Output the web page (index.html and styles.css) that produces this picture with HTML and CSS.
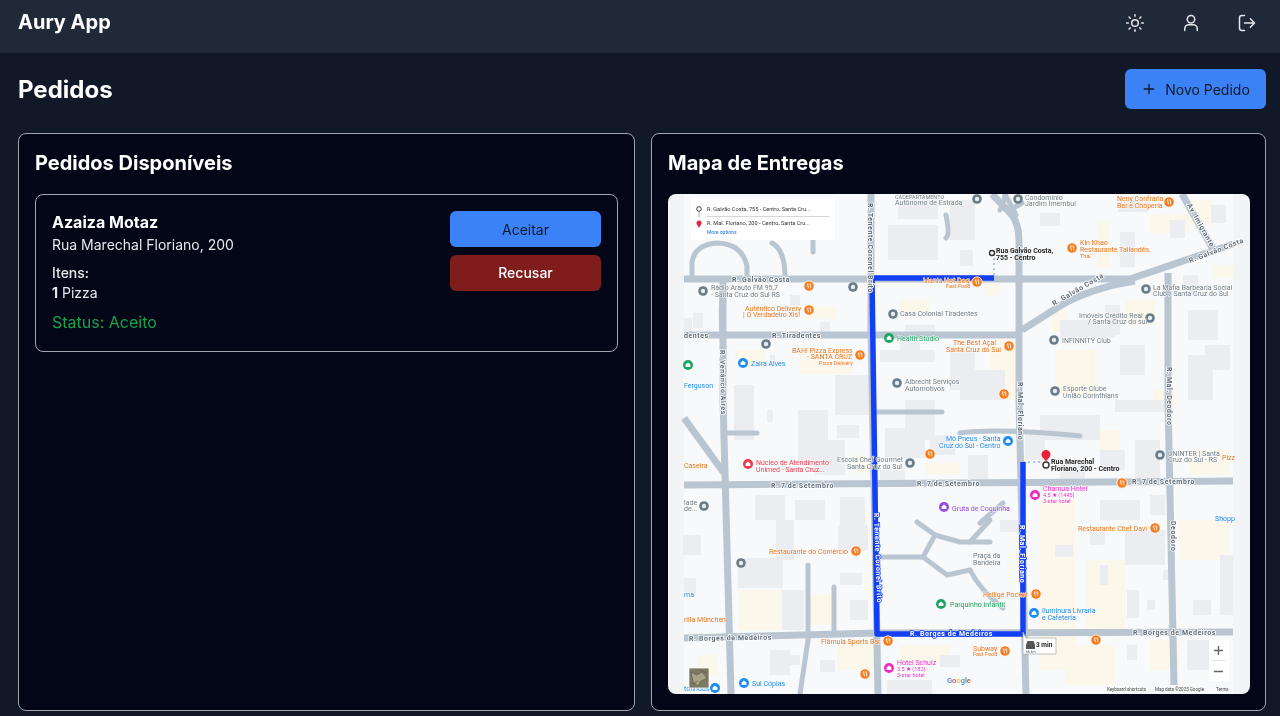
FILE: index.html
```html
<!DOCTYPE html>
<html lang="pt-BR">
<head>
<meta charset="utf-8">
<title>Aury App</title>
<link rel="stylesheet" href="styles.css">
</head>
<body>
<header class="topbar">
  <div class="brand">Aury App</div>
  <nav class="top-icons">
    <svg class="ico" viewBox="0 0 24 24"><circle cx="12" cy="12" r="4"/><path d="M12 2v2M12 20v2M4.900 4.900l1.400 1.400M17.700 17.700l1.400 1.400M2 12h2M20 12h2M6.300 17.700l-1.400 1.400M19.100 4.900l-1.400 1.400"/></svg>
    <svg class="ico" viewBox="0 0 24 24"><circle cx="12" cy="7.500" r="4.500"/><path d="M4.500 21v-2a5 5 0 0 1 5-5h5a5 5 0 0 1 5 5v2"/></svg>
    <svg class="ico" viewBox="0 0 24 24"><path d="M9 21H6a3 3 0 0 1-3-3V6a3 3 0 0 1 3-3h3"/><path d="M16 7l5 5-5 5M21 12H9"/></svg>
  </nav>
</header>
<main class="page">
  <div class="page-head">
    <h1>Pedidos</h1>
    <button class="btn btn-new"><svg class="plus" viewBox="0 0 24 24"><path d="M12 5v14M5 12h14"/></svg>Novo Pedido</button>
  </div>
  <div class="columns">
    <section class="panel">
      <h2>Pedidos Disponíveis</h2>
      <article class="order">
        <div class="order-info">
          <h3>Azaiza Motaz</h3>
          <p class="addr">Rua Marechal Floriano, 200</p>
          <p class="items-label">Itens:</p>
          <p class="items"><b>1</b> Pizza</p>
          <p class="status">Status: Aceito</p>
        </div>
        <div class="order-actions">
          <button class="btn btn-accept">Aceitar</button>
          <button class="btn btn-refuse">Recusar</button>
        </div>
      </article>
    </section>
    <section class="panel">
      <h2>Mapa de Entregas</h2>
      <div class="map">
        <svg class="map-svg" viewBox="668 194 582 500" width="582" height="500">
          <defs>
            <g id="food"><circle r="5.200" fill="currentColor" stroke="#fff" stroke-width=".8"/><path d="M-1.600-2.600v2.200a1 1 0 0 0 1 1v1.800M.0-2.600v2.200M1.700-2.600v5" stroke="#fff" stroke-width=".8" fill="none"/></g>
            <g id="ring"><circle r="4.800" fill="currentColor"/><circle r="2.200" fill="#fff" opacity=".85"/></g>
            <g id="shop"><circle r="5" fill="currentColor"/><path d="M-2.400 2v-2.400L0-2.600l2.400 2.200V2z" fill="#fff"/></g>
          </defs>

          <rect class="m-bg" x="668" y="194" width="582" height="500"/>
          <rect class="m-inner" x="684" y="194" width="549" height="500"/>

          <g class="yellow">
            <rect x="735" y="350" width="30" height="14"/><rect x="733" y="410" width="14" height="12"/>
            <rect x="800" y="352" width="52" height="22"/><rect x="806" y="307" width="30" height="12"/>
            <rect x="900" y="300" width="30" height="12"/><rect x="985" y="283" width="15" height="12"/>
            <rect x="1097" y="222" width="12" height="45"/><rect x="1150" y="215" width="40" height="18"/>
            <rect x="1186" y="200" width="25" height="25"/><rect x="1213" y="265" width="20" height="12"/>
            <rect x="1125" y="300" width="30" height="25"/><rect x="1052" y="310" width="16" height="22"/>
            <rect x="1055" y="350" width="40" height="45"/><rect x="990" y="340" width="25" height="60"/>
            <rect x="1100" y="430" width="20" height="30"/><rect x="1153" y="390" width="22" height="15"/>
            <rect x="1040" y="500" width="35" height="170"/><rect x="1085" y="560" width="40" height="70"/>
            <rect x="1180" y="520" width="50" height="40"/><rect x="1190" y="450" width="40" height="25"/>
            <rect x="1065" y="645" width="50" height="40"/><rect x="738" y="590" width="60" height="40"/>
            <rect x="808" y="595" width="30" height="30"/><rect x="837" y="645" width="45" height="25"/>
            <rect x="697" y="655" width="20" height="20"/><rect x="900" y="645" width="50" height="20"/>
            <rect x="1150" y="640" width="30" height="30"/><rect x="856" y="455" width="15" height="18"/>
            <rect x="925" y="463" width="35" height="12"/><rect x="742" y="408" width="10" height="10"/>
          </g>
          <g class="bldg">
            <rect x="898" y="194" width="40" height="25"/><rect x="888" y="225" width="50" height="35"/>
            <rect x="950" y="200" width="25" height="40"/><rect x="1040" y="213" width="20" height="13"/>
            <rect x="960" y="250" width="13" height="16"/><rect x="1118" y="200" width="30" height="12"/>
            <rect x="1170" y="220" width="15" height="18"/><rect x="1211" y="205" width="15" height="18"/>
            <rect x="1120" y="232" width="15" height="35"/><rect x="1183" y="275" width="15" height="20"/>
            <rect x="1060" y="320" width="55" height="18"/><rect x="1105" y="305" width="15" height="30"/>
            <rect x="1188" y="310" width="30" height="30"/><rect x="1205" y="345" width="25" height="25"/>
            <rect x="1120" y="345" width="25" height="30"/><rect x="1188" y="355" width="25" height="45"/>
            <rect x="1115" y="400" width="50" height="12"/><rect x="1040" y="415" width="60" height="25"/>
            <rect x="1135" y="440" width="25" height="45"/><rect x="1100" y="450" width="25" height="20"/>
            <rect x="950" y="350" width="25" height="40"/><rect x="960" y="370" width="45" height="30"/>
            <rect x="1025" y="430" width="20" height="30"/><rect x="968" y="455" width="20" height="25"/>
            <rect x="905" y="325" width="30" height="12"/><rect x="900" y="340" width="20" height="10"/>
            <rect x="905" y="400" width="30" height="40"/><rect x="880" y="350" width="55" height="12"/>
            <rect x="798" y="410" width="30" height="55"/><rect x="815" y="440" width="30" height="35"/>
            <rect x="837" y="425" width="22" height="13"/><rect x="835" y="375" width="35" height="40"/>
            <rect x="734" y="385" width="20" height="55"/><rect x="767" y="410" width="6" height="12"/>
            <rect x="885" y="428" width="40" height="30"/><rect x="930" y="435" width="25" height="20"/>
            <rect x="755" y="495" width="30" height="25"/><rect x="795" y="500" width="30" height="20"/>
            <rect x="840" y="497" width="25" height="35"/><rect x="738" y="558" width="45" height="30"/>
            <rect x="776" y="520" width="18" height="40"/><rect x="838" y="525" width="30" height="25"/>
            <rect x="840" y="573" width="22" height="12"/><rect x="683" y="535" width="18" height="20"/>
            <rect x="684" y="578" width="12" height="18"/><rect x="782" y="590" width="22" height="40"/>
            <rect x="850" y="600" width="18" height="20"/><rect x="770" y="650" width="20" height="25"/>
            <rect x="790" y="655" width="10" height="10"/><rect x="820" y="660" width="15" height="12"/>
            <rect x="887" y="680" width="45" height="14"/><rect x="940" y="655" width="20" height="12"/>
            <rect x="1000" y="520" width="25" height="12"/><rect x="1055" y="545" width="18" height="12"/>
            <rect x="1100" y="565" width="8" height="20"/><rect x="1125" y="530" width="40" height="35"/>
            <rect x="1163" y="570" width="10" height="10"/><rect x="1220" y="555" width="13" height="60"/>
            <rect x="1193" y="600" width="18" height="15"/><rect x="1127" y="645" width="10" height="15"/>
            <rect x="1127" y="590" width="12" height="28"/><rect x="1147" y="600" width="8" height="10"/>
            <rect x="1187" y="640" width="22" height="30"/><rect x="1060" y="460" width="25" height="20"/>
            <rect x="1100" y="500" width="40" height="20"/><rect x="1150" y="495" width="15" height="20"/>
            <rect x="1090" y="530" width="15" height="15"/><rect x="880" y="470" width="25" height="10"/>
            <rect x="684" y="318" width="8" height="15"/><rect x="693" y="313" width="10" height="15"/>
            <rect x="790" y="295" width="10" height="10"/><rect x="770" y="355" width="5" height="12"/>
            <rect x="820" y="322" width="10" height="10"/>
          </g>

          <g class="road">
            <path d="M684 279H870 1000 1130L1233 244"/>
            <path d="M1135 281Q1090 288 1060 306L1022 330"/>
            <path d="M684 335H1022"/>
            <path d="M871 194V330L878 694"/>
            <path d="M992 194L1012 215Q1019 225 1019 240V400L1026 694"/>
            <path d="M723 279V400L731 694"/>
            <path d="M684 485L1233 481"/>
            <path d="M684 638L878 633 1233 632"/>
            <path d="M1168 273V400L1174 685"/>
            <path d="M1182 194L1213 249"/>
            <path d="M684 418L724 473"/>
          </g>
          <g class="road thin">
            <path d="M877 412H942"/><path d="M960 433Q1000 428 1080 436"/>
            <path d="M727 433H757"/>
            <path d="M692 275V262Q695 244 718 243 742 244 747 266V277"/>
            <path d="M772 243Q785 250 785 277"/><path d="M813 240V252"/>
            <path d="M724 279Q720 300 722 335"/>
            <path d="M946 215Q950 235 946 238"/>
            <path d="M917 522L935 535 923 557H882"/><path d="M935 535L960 542H990"/>
            <path d="M923 557L947 575 970 570"/><path d="M970 542L990 520"/>
            <path d="M970 570Q980 590 1003 608"/><path d="M980 523L1003 503"/>
            <path d="M808 565V640L800 694"/><path d="M834 587V633"/>
            <path d="M1005 194Q1005 200 1000 210"/>
            <path d="M1006 196L1016 215"/><path d="M1012 209L1022 203"/>
          </g>

          <path class="dots" d="M994 258V276"/>
          <path class="dots" d="M1023 462H1040"/>
          <path class="route" d="M994 278H872L877 634H1023V462"/>

          <g class="rl">
            <text x="732" y="282">R. Galvão Costa</text>
            <text x="772" y="338">R. Tiradentes</text>
            <text x="684" y="338">dentes</text>
            <text x="771" y="488">R. 7 de Setembro</text>
            <text x="917" y="486">R. 7 de Setembro</text>
            <text x="1132" y="484">R. 7 de Setembro</text>
            <text x="689" y="641" transform="rotate(-1 689 641)">R. Borges de Medeiros</text>
            <text x="910" y="636" class="on-route">R. Borges de Medeiros</text>
            <text x="1133" y="635">R. Borges de Medeiros</text>
            <text x="0" y="0" transform="translate(868 203) rotate(90)">R. Tenente Coronel Brito</text>
            <text x="0" y="0" transform="translate(874 513) rotate(88)" class="on-route">R. Tenente Coronel Brito</text>
            <text x="0" y="0" transform="translate(720 350) rotate(89)">R. Venâncio Aires</text>
            <text x="0" y="0" transform="translate(1018 382) rotate(90)">R. Mal. Floriano</text>
            <text x="0" y="0" transform="translate(1020 525) rotate(90)" class="on-route">R. Mal. Floriano</text>
            <text x="0" y="0" transform="translate(1167 367) rotate(90)">R. Mal. Deodoro</text>
            <text x="0" y="0" transform="translate(1171 521) rotate(90)">Deodoro</text>
            <text x="0" y="0" transform="translate(1187 205) rotate(61)">Av. Imigrante</text>
            <text x="0" y="0" transform="translate(1054 306) rotate(-30)">R. Galvão Costa</text>
            <text x="0" y="0" transform="translate(1190 263) rotate(-21)">R. Galvão Costa</text>
          </g>

          <g class="c-orange">
            <use href="#food" x="809" y="286"/><use href="#food" x="809" y="310"/><use href="#food" x="860" y="355"/>
            <use href="#food" x="977" y="282"/><use href="#food" x="1009" y="346"/><use href="#food" x="1072" y="248"/>
            <use href="#food" x="1169" y="202"/><use href="#food" x="1004" y="394"/><use href="#food" x="930" y="454"/>
            <use href="#food" x="1122" y="483"/><use href="#food" x="1155" y="528"/><use href="#food" x="856" y="551"/>
            <use href="#food" x="1036" y="594"/><use href="#food" x="1005" y="651"/><use href="#food" x="1096" y="640"/>
            <use href="#food" x="888" y="641"/><use href="#food" x="865" y="674"/>
          </g>
          <g class="c-grey">
            <use href="#ring" x="703" y="291"/><use href="#ring" x="853" y="287"/><use href="#ring" x="893" y="314"/>
            <use href="#ring" x="897" y="383"/><use href="#ring" x="910" y="463"/><use href="#ring" x="1054" y="340"/>
            <use href="#ring" x="1055" y="391"/><use href="#ring" x="1150" y="318"/><use href="#ring" x="1146" y="289"/>
            <use href="#ring" x="1160" y="455"/><use href="#ring" x="1018" y="199"/><use href="#ring" x="977" y="199"/>
            <use href="#ring" x="741" y="563"/><use href="#ring" x="704" y="506"/><use href="#ring" x="766" y="344"/>
          </g>
          <g class="c-blue">
            <use href="#shop" x="743" y="363"/><use href="#shop" x="1008" y="441"/><use href="#shop" x="1034" y="613"/>
            <use href="#shop" x="744" y="683"/><use href="#shop" x="715" y="688"/>
          </g>
          <g class="c-green">
            <use href="#shop" x="889" y="338"/><use href="#shop" x="941" y="604"/><use href="#shop" x="688" y="365"/>
          </g>
          <g class="c-pink"><use href="#shop" x="1035" y="495"/><use href="#shop" x="889" y="668"/></g>
          <g class="c-red"><use href="#shop" x="748" y="464"/></g>
          <g class="c-purple"><use href="#shop" x="944" y="507"/></g>

          <g class="pl grey">
            <text x="895" y="199" class="tiny">CADEPARTAMENTO</text><text x="895" y="205">Autônomo de Estrada</text>
            <text x="1025" y="200">Condomínio</text><text x="1025" y="206">Jardim Imembuí</text>
            <text x="711" y="290">Rádio Arauto FM 95,7</text><text x="711" y="297">- Santa Cruz do Sul RS</text>
            <text x="900" y="316">Casa Colonial Tiradentes</text>
            <text x="905" y="384">Albrecht Serviços</text><text x="905" y="391">Automotivos</text>
            <text x="1153" y="290">La Mafia Barbearia Social</text><text x="1153" y="296">Club / Santa Cruz do Sul</text>
            <text x="1079" y="318">Imóveis Crédito Real</text><text x="1088" y="324">/ Santa Cruz do sul</text>
            <text x="1062" y="343">INFINNITY Club</text>
            <text x="1063" y="391">Esporte Clube</text><text x="1063" y="398">União Corinthians</text>
            <text x="1168" y="456">UNINTER | Santa</text><text x="1168" y="462">Cruz do Sul - RS</text>
            <text x="837" y="462">Escola Chef Gourmet</text><text x="847" y="469">Santa Cruz do Sul</text>
            <text x="973" y="558">Praça da</text><text x="973" y="565">Bandeira</text>
            <text x="684" y="505">lade</text><text x="684" y="511">de...</text>
          </g>
          <g class="pl orange">
            <text x="923" y="283">Mania Hot Dog</text><text x="946" y="288" class="tiny">Fast Food</text>
            <text x="745" y="311">Autêntico Delivery</text><text x="743" y="317">| O Verdadeiro Xis!</text>
            <text x="792" y="353">BAH! Pizza Express</text><text x="807" y="359">- SANTA CRUZ</text><text x="819" y="365" class="tiny">Pizza Delivery</text>
            <text x="953" y="345">The Best Açaí</text><text x="946" y="352">Santa Cruz do Sul</text>
            <text x="1117" y="201">Neny Confraria</text><text x="1117" y="208">Bar e Choperia</text>
            <text x="1080" y="245">Kin Khao</text><text x="1080" y="252">Restaurante Tailandês</text><text x="1080" y="258" class="tiny">Thai</text>
            <text x="1222" y="460">Pizz</text><text x="684" y="468">Caseira</text>
            <text x="1078" y="531">Restaurante Chef Davi</text><text x="769" y="554">Restaurante do Comércio</text>
            <text x="684" y="622">rilla München</text><text x="821" y="644">Flâmula Sports Bar</text>
            <text x="983" y="597">Heilige Pocket</text><text x="973" y="651">Subway</text><text x="973" y="656" class="tiny">Fast Food</text>
          </g>
          <g class="pl blue">
            <text x="751" y="366">Zaira Alves</text><text x="684" y="388">Ferguson</text>
            <text x="946" y="441">Mô Pneus - Santa</text><text x="939" y="448">Cruz do Sul - Centro</text>
            <text x="1215" y="521">Shopp</text><text x="684" y="597">ma</text>
            <text x="1042" y="613">Iluminura Livraria</text><text x="1042" y="620">e Cafeteria</text>
            <text x="752" y="686">Sul Cópias</text><text x="684" y="691">tofindus</text>
          </g>
          <g class="pl green">
            <text x="897" y="341">Health Studio</text><text x="950" y="607">Parquinho infantil</text>
          </g>
          <g class="pl red">
            <text x="756" y="465">Núcleo de Atendimento</text><text x="756" y="472">Unimed - Santa Cruz...</text>
          </g>
          <g class="pl pink">
            <text x="1043" y="491">Chamua Hotel</text><text x="1043" y="497" class="tiny">4.5 ★ (1445)</text><text x="1043" y="503" class="tiny">3-star hotel</text>
            <text x="897" y="665">Hotel Schulz</text><text x="897" y="671" class="tiny">3.5 ★ (182)</text><text x="897" y="677" class="tiny">3-star hotel</text>
          </g>
          <g class="pl purple"><text x="952" y="511">Gruta de Coquinha</text></g>

          <circle class="end" cx="992" cy="253" r="2.500"/>
          <circle class="end" cx="1046" cy="465" r="3"/>
          <path class="pin" d="M1046 462c-1-3-4.500-4.500-4.500-7.500a4.500 4.500 0 0 1 9 0c0 3-3.500 4.500-4.500 7.500z"/>
          <g class="dest">
            <text x="996" y="253">Rua Galvão Costa,</text><text x="996" y="260">755 - Centro</text>
            <text x="1051" y="464">Rua Marechal</text><text x="1051" y="471">Floriano, 200 - Centro</text>
          </g>

          <rect class="card" x="691" y="199" width="144" height="41"/>
          <circle class="start-dot" cx="699" cy="209" r="2.300"/>
          <path class="d-line" d="M699 212V217"/>
          <path class="pin" d="M699 228c-.6-2-2.500-3-2.500-5a2.500 2.500 0 0 1 5 0c0 2-1.900 3-2.500 5z"/>
          <path class="d-rule" d="M707 216.500H829"/>
          <text class="d-text" x="707" y="211">R. Galvão Costa, 755 - Centro, Santa Cru...</text>
          <text class="d-text" x="707" y="225">R. Mal. Floriano, 200 - Centro, Santa Cru...</text>
          <text class="d-more" x="707" y="233.500">More options</text>

          <path class="tag" d="M1023 632l3 6h30v16h-33z"/>
          <path class="car" d="M1026 649v-4l1.500-4h6l1.500 4v4z"/>
          <text class="tag-t" x="1036" y="646.500">3 min</text>
          <text class="tag-s" x="1026" y="652.500">66 km</text>

          <rect class="ctl" x="1209" y="640" width="20" height="41"/>
          <path class="ctl-line" d="M1212 660.500H1226"/>
          <path class="ctl-ic" d="M1218.500 646v9M1214 650.500h9M1214 671.500h9"/>

          <rect class="sat" x="689" y="668" width="20" height="20"/>
          <path class="sat-a" d="M691 672l6 3 5-3 5 6-6 3-3 5-5-4zM700 670l7 3M692 684l6-3"/>

          <text class="g-logo" y="683"><tspan x="947" fill="#4285f4">G</tspan><tspan fill="#ea4335">o</tspan><tspan fill="#fbbc04">o</tspan><tspan fill="#4285f4">g</tspan><tspan fill="#34a853">l</tspan><tspan fill="#ea4335">e</tspan></text>
          <g class="foot">
            <text x="1107" y="690.500">Keyboard shortcuts</text>
            <text x="1155" y="690.500">Map data ©2025 Google</text>
            <text x="1216" y="690.500">Terms</text>
          </g>
        </svg>
      </div>
    </section>
  </div>
</main>
</body>
</html>
```

FILE: styles.css
```css
* { box-sizing: border-box; }
html, body { margin: 0; height: 716px; overflow: hidden; }
body {
  background: #111827;
  color: #f9fafb;
  font-family: Inter, "Noto Sans", sans-serif;
  display: flex;
  flex-direction: column;
}
.topbar {
  height: 53px;
  background: #1f2937;
  display: flex;
  align-items: center;
  justify-content: space-between;
  padding: 0 23px 8px 18px;
  flex: none;
  filter: blur(.3px);
}
.brand { font-size: 20px; font-weight: 700; color: #fff; margin-top: -2px; }
.top-icons { display: flex; gap: 36px; }
.ico {
  width: 20px; height: 20px;
  fill: none; stroke: #e5e7eb; stroke-width: 1.800;
  stroke-linecap: round; stroke-linejoin: round;
  display: block;
}
.page {
  flex: 1;
  min-height: 0;
  display: flex;
  flex-direction: column;
  padding: 16px 14px 5px 18px;
  gap: 24px;
  filter: blur(.3px);
}
.page-head { display: flex; justify-content: space-between; align-items: center; height: 40px; flex: none; }
h1 { margin: 0; font-size: 24px; font-weight: 700; color: #fff; }
.btn {
  border: 0;
  border-radius: 6px;
  font-family: inherit;
  font-size: 14px;
  display: flex;
  align-items: center;
  justify-content: center;
}
.btn-new {
  width: 141px; height: 40px;
  background: #3b82f6;
  color: #111827;
  gap: 8px;
}
.plus { width: 16px; height: 16px; fill: none; stroke: #111827; stroke-width: 2; stroke-linecap: round; }
.columns {
  flex: 1;
  min-height: 0;
  display: grid;
  grid-template-columns: 617px 615px;
  gap: 16px;
}
.panel {
  background: #020617;
  border: 1px solid #a1a5ad;
  border-radius: 8px;
  padding: 16px;
  display: flex;
  flex-direction: column;
  gap: 16px;
  min-height: 0;
}
h2 { margin: 0 0 2px; font-size: 20px; line-height: 26px; font-weight: 700; color: #fff; }
.order {
  height: 158px;
  border: 1px solid #a1a5ad;
  border-radius: 8px;
  padding: 16px;
  display: flex;
  justify-content: space-between;
  flex: none;
}
.order-info p { margin: 0; }
h3 { margin: 0 0 2px; font-size: 16px; line-height: 22px; font-weight: 700; color: #fff; }
.addr { font-size: 14px; line-height: 20px; color: #e5e7eb; }
.items-label { font-size: 14px; line-height: 20px; font-weight: 500; margin-top: 8px !important; color: #e5e7eb; }
.items { font-size: 14px; line-height: 20px; color: #e5e7eb; }
.status { font-size: 16px; line-height: 24px; color: #16a34a; margin-top: 7px !important; }
.order-actions { display: flex; flex-direction: column; gap: 8px; width: 151px; }
.btn-accept, .btn-refuse { height: 36px; width: 100%; }
.btn-accept { background: #3b82f6; color: #111827; }
.btn-refuse { background: #7f1d1d; color: #fff; font-weight: 500; padding-bottom: 2px; }
.map {
  width: 582px;
  height: 500px;
  border-radius: 8px;
  overflow: hidden;
  flex: none;
}
.map-svg { display: block; filter: blur(.35px); font-family: Roboto, sans-serif; }

.m-bg { fill: #f3f4f6; }
.m-inner { fill: #f8f9fa; }
.yellow rect { fill: #fbf7ea; }
.bldg rect { fill: #ebedf0; }
.road path { fill: none; stroke: #b9c5d1; stroke-width: 7; stroke-linejoin: round; }
.road.thin path { stroke-width: 5; stroke-linecap: round; }
.route { fill: none; stroke: #1440f5; stroke-width: 5.500; stroke-linejoin: round; }
.dots { fill: none; stroke: #a9c2f5; stroke-width: 2; stroke-dasharray: 2 3; }
.rl text { font-size: 7px; font-weight: 700; fill: #5e6b78; stroke: #fff; stroke-width: 1.600; paint-order: stroke; letter-spacing: .55px; }
.rl text.on-route { fill: #fff; stroke: #1440f5; }
.pl text { font-size: 7px; paint-order: stroke; stroke: #fff; stroke-width: .8; }
.pl text.tiny { font-size: 5.500px; }
.pl.grey text { fill: #6f7c85; }
.pl.orange text { fill: #e8711a; }
.pl.blue text { fill: #1a86f0; }
.pl.green text { fill: #189a5b; }
.pl.red text { fill: #e6364b; }
.pl.pink text { fill: #ee2bc0; }
.pl.purple text { fill: #8e3fd8; }
.c-orange { color: #f57c1f; }
.c-grey { color: #6a7c88; }
.c-blue { color: #1a8cf5; }
.c-green { color: #1aa561; }
.c-pink { color: #ee2bc0; }
.c-red { color: #ea3a4c; }
.c-purple { color: #9a4be0; }
.end { fill: #fff; stroke: #333; stroke-width: 1.400; }
.pin { fill: #e8203a; }
.dest text { font-size: 7px; font-weight: 700; fill: #222; stroke: #fff; stroke-width: 1; paint-order: stroke; }
.card { fill: #fff; }
.start-dot { fill: #fff; stroke: #444; stroke-width: 1; }
.d-line { stroke: #999; stroke-width: .8; }
.d-rule { stroke: #c4c4c4; stroke-width: .7; }
.d-text { font-size: 5.600px; fill: #333; }
.d-more { font-size: 5px; fill: #1a73e8; }
.tag { fill: #fff; stroke: #a8a8a8; stroke-width: .7; }
.car { fill: #555; }
.tag-t { font-size: 6.500px; font-weight: 700; fill: #222; }
.tag-s { font-size: 3.500px; fill: #555; }
.ctl { fill: #fff; }
.ctl-line { stroke: #e3e3e3; stroke-width: 1; }
.ctl-ic { stroke: #666; stroke-width: 1.400; fill: none; }
.sat { fill: #7d7a63; stroke: #fff; stroke-width: .7; }
.sat-a { fill: #a9a488; stroke: #565545; stroke-width: .6; }
.g-logo { font-size: 7.500px; font-weight: 500; }
.foot text { font-size: 4.500px; fill: #444; }
```
